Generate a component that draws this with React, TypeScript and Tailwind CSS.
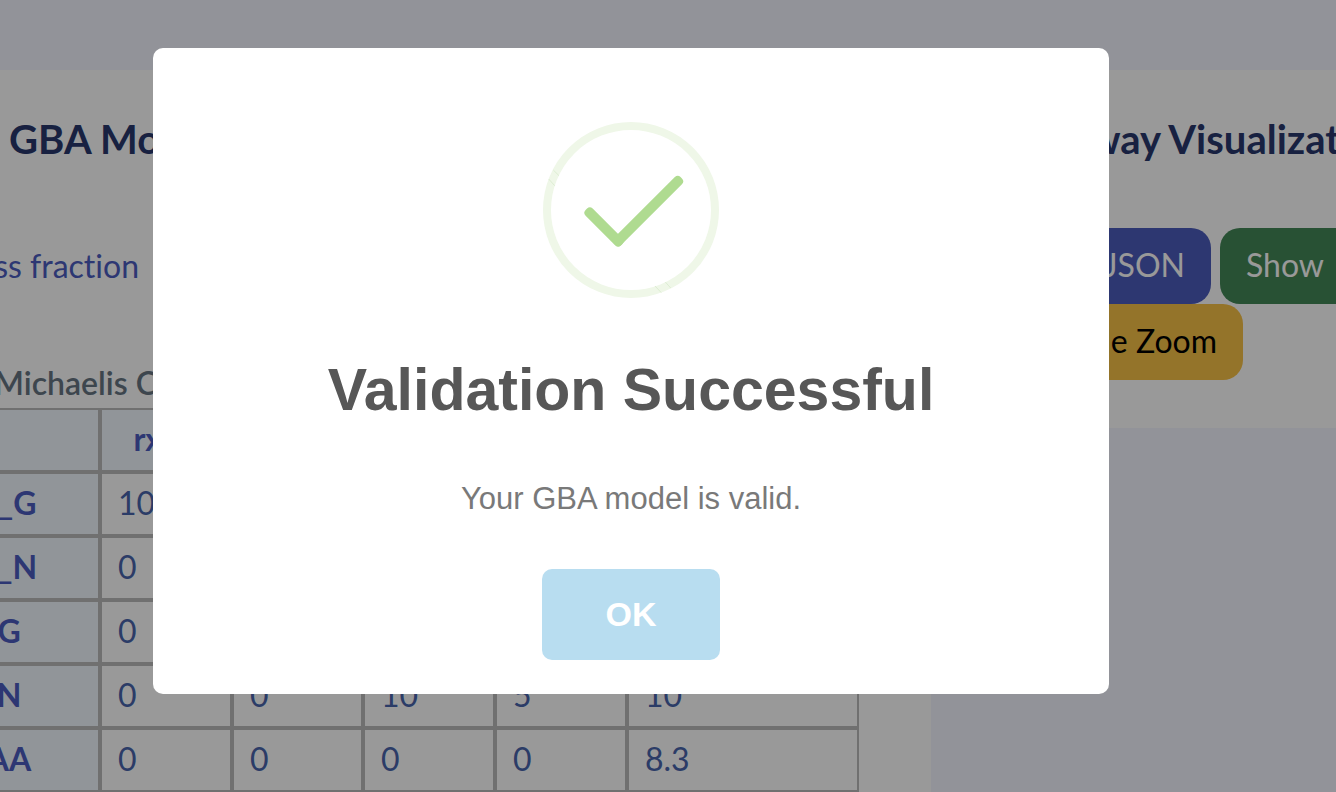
import React from "react";

const reactions = ["rxn1", "", "", "", ""];

const rows = [
  { name: "x_G", values: ["10", "", "", "", ""] },
  { name: "x_N", values: ["0", "", "", "", ""] },
  { name: "G", values: ["0", "", "", "", ""] },
  { name: "N", values: ["0", "0", "10", "5", "10"] },
  { name: "AA", values: ["0", "0", "0", "0", "8.3"] },
];

function ModelPanel() {
  return (
    <section className="-ml-[82px] w-[1013px] shrink-0 bg-white pt-[45px] pb-12">
      <h2 className="pl-[91px] text-[40px] leading-[48px] font-bold text-[#28376d]">GBA Model</h2>
      <a href="#mass" className="mt-[83px] block pl-[31px] text-[32px] leading-10 text-[#4b5dc0]">
        Mass fraction
      </a>
      <h3 className="mt-[73px] mb-px pl-[76px] text-[32px] leading-[48px] font-semibold text-[#677582]">
        Michaelis Constants
      </h3>
      <table className="w-[941px] table-fixed border-separate border-spacing-0 text-[32px] leading-10">
        <colgroup>
          <col className="w-[182px]" />
          <col className="w-[132px]" />
          <col className="w-[131px]" />
          <col className="w-[132px]" />
          <col className="w-[132px]" />
          <col className="w-[232px]" />
        </colgroup>
        <thead>
          <tr className="h-16">
            <td className="border-2 border-[#bbb] bg-[#f2f8ff]" />
            {reactions.map((name, i) => (
              <th key={i} scope="col" className="border-2 border-[#bbb] bg-[#f2f8ff] px-0 pt-0 pb-0.5 text-center font-bold text-[#4b5dc0]">
                {name}
              </th>
            ))}
          </tr>
        </thead>
        <tbody>
          {rows.map((row) => (
            <tr key={row.name} className="h-16">
              <th scope="row" className="border-2 border-[#bbb] bg-[#f2f8ff] px-0 pt-0 pb-0.5 text-center font-bold text-[#4b5dc0]">
                {row.name}
              </th>
              {row.values.map((value, i) => (
                <td key={i} className="border-2 border-[#bbb] pt-0 pr-0 pb-0.5 pl-4 text-[#4864ac]">
                  {value}
                </td>
              ))}
            </tr>
          ))}
        </tbody>
      </table>
    </section>
  );
}

function PathwayPanel() {
  return (
    <section className="min-w-0 flex-1 overflow-hidden bg-white pt-[45px] pb-12 pl-9 whitespace-nowrap">
      <h2 className="pl-2 text-[40px] leading-[48px] font-bold text-[#28376d]">Pathway Visualization</h2>
      <div className="mt-[65px] flex gap-[9px] text-[32px]">
        <button className="h-[76px] w-[212px] shrink-0 rounded-[20px] bg-[#4b5cbc] px-[26px] pb-0.5 text-right text-white">
          Load JSON
        </button>
        <button className="h-[76px] w-[212px] shrink-0 rounded-[20px] bg-[#438757] px-[26px] pb-0.5 text-left text-white">
          Show
        </button>
      </div>
      <button className="block h-[76px] w-[244px] rounded-[20px] bg-[#f7c146] px-[26px] pb-0.5 text-right text-[32px] text-black">
        Toggle Zoom
      </button>
    </section>
  );
}

function SuccessIcon() {
  return (
    <svg viewBox="0 0 176 176" className="size-44" aria-hidden="true">
      <circle cx="88" cy="88" r="84" fill="none" stroke="#eff7e8" strokeWidth="8" />
      <path
        d="M10.3 48 16 53.7M5.7 57l6 6.7M112 164l6.3 6.7M122.3 160l5.4 6"
        stroke="#d4e8c8"
        strokeWidth="0.7"
      />
      <g fill="#afdb90">
        <rect x="36" y="100" width="50" height="10" rx="4" transform="rotate(45 61 105)" />
        <rect x="58" y="84" width="94" height="10" rx="4" transform="rotate(-45 105 89)" />
      </g>
    </svg>
  );
}

function ValidationDialog() {
  return (
    <div className="fixed inset-0 flex items-start justify-center bg-black/40 pt-12 pr-[74px]">
      <div
        role="dialog"
        aria-modal="true"
        aria-labelledby="dialog-title"
        className="flex w-full max-w-[956px] flex-col items-center rounded-[10px] bg-white pt-[74px] pb-[34px] text-center font-['Liberation_Sans',sans-serif]"
      >
        <SuccessIcon />
        <h2 id="dialog-title" className="mt-14 text-[59px] leading-[72px] font-bold text-[#575757]">
          Validation Successful
        </h2>
        <p className="mt-[53px] text-[31px] leading-10 text-[#797979]">Your GBA model is valid.</p>
        <button className="mt-[50px] h-[91px] w-[178px] rounded-[10px] bg-[#b8ddf0] text-[34px] font-bold text-white">
          OK
        </button>
      </div>
    </div>
  );
}

export default function App() {
  return (
    <div className="h-screen overflow-hidden bg-[#f3f5ff] pt-[70px] font-[Lato,sans-serif] [font-variant-ligatures:none]">
      <main className="flex items-start gap-8">
        <ModelPanel />
        <PathwayPanel />
      </main>
      <ValidationDialog />
    </div>
  );
}
